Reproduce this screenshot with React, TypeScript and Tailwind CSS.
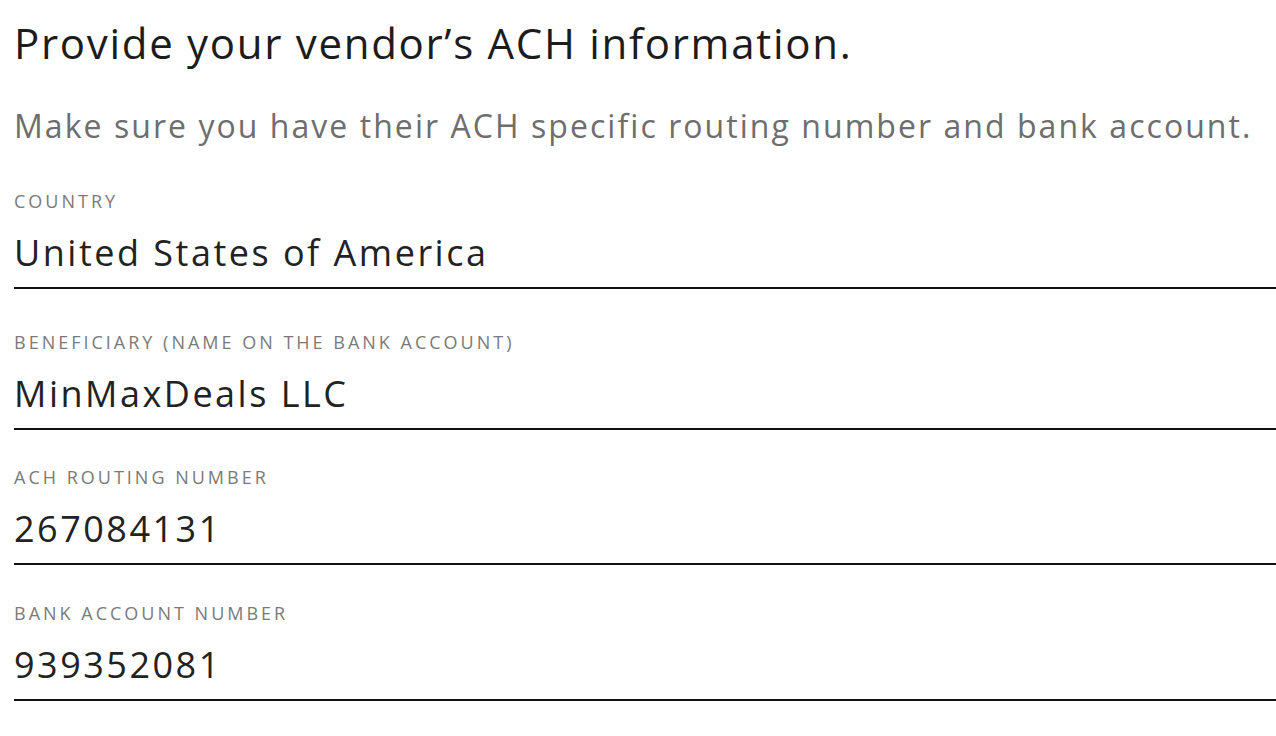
const fields = [
  { label: 'COUNTRY', value: 'United States of America', gap: 'mt-[50px]' },
  { label: 'BENEFICIARY (NAME ON THE BANK ACCOUNT)', value: 'MinMaxDeals LLC', gap: 'mt-[44px]' },
  { label: 'ACH ROUTING NUMBER', value: '267084131', gap: 'mt-[38px]' },
  { label: 'BANK ACCOUNT NUMBER', value: '939352081', gap: 'mt-[39px]' },
];

export default function App() {
  return (
    <div className="min-h-screen bg-white pl-[14px] font-['Open_Sans',sans-serif]">
      <h1 className="pt-[22px] text-[42px] leading-[42px] font-normal tracking-[1.7px] text-[#1c1c1c]">
        Provide your vendor’s ACH information.
      </h1>
      <p className="mt-[46px] text-[32px] leading-[32px] tracking-[2.05px] text-[#6e6e6e]">
        Make sure you have their ACH specific routing number and bank account.
      </p>

      {fields.map(field => (
        <div key={field.label} className={field.gap}>
          <div className="text-[18px] leading-[18px] tracking-[3px] text-[#7a7a7a]">{field.label}</div>
          <div className="mt-[25px] border-b-2 border-[#111] pb-[16px] text-[36px] leading-[36px] tracking-[2.5px] text-[#222]">
            {field.value}
          </div>
        </div>
      ))}
    </div>
  );
}
